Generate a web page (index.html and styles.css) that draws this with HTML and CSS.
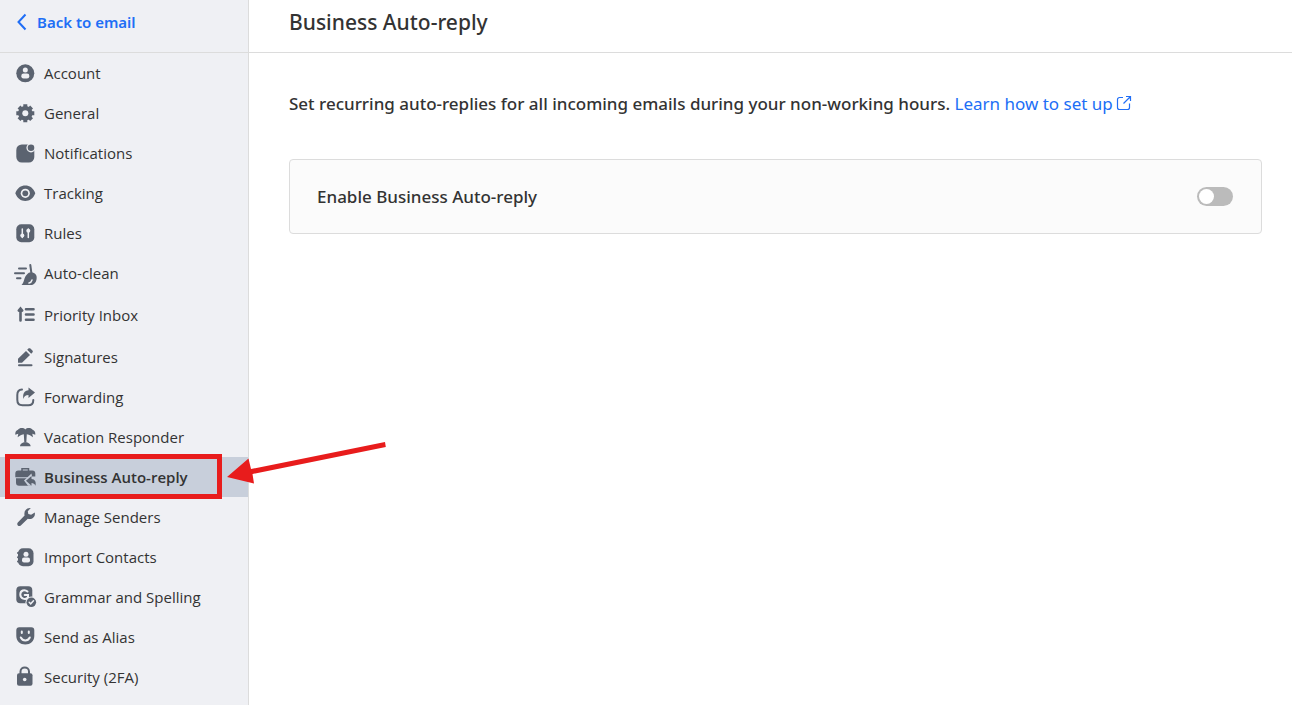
FILE: index.html
```
<!DOCTYPE html>
<html lang="en">
<head>
    <meta charset="UTF-8">
    <meta name="viewport" content="width=device-width, initial-scale=1.0">
    <title>Business Auto-reply</title>
    <link rel="stylesheet" href="styles.css">
</head>
<body>
    <div class="app">
        <aside class="sidebar">
            <a class="back" href="#">
                <svg class="back-icon" viewBox="0 0 12 18"><path d="M9.5 1.5 2.5 9l7 7.5"/></svg>
                Back to email
            </a>
            <nav class="menu">
                <a class="item" href="#">
                    <svg class="icon" viewBox="0 0 22 22"><circle cx="11.3" cy="11.3" r="9"/><circle class="cut" cx="11.3" cy="8" r="2.5"/><rect class="cut" x="7.3" y="11.5" width="8" height="5" rx="2.3"/></svg>
                    Account
                </a>
                <a class="item" href="#">
                    <svg class="icon" viewBox="0 0 22 22"><circle cx="11.3" cy="11.3" r="7.2"/><path class="line teeth" d="M11.3 2.3v18M2.3 11.3h18M5 5l12.6 12.6M17.6 5 5 17.6"/><circle class="cut" cx="11.3" cy="11.3" r="3"/></svg>
                    General
                </a>
                <a class="item" href="#">
                    <svg class="icon" viewBox="0 0 22 22"><rect x="2.3" y="2.5" width="18" height="18" rx="5.5"/><circle class="cut" cx="17" cy="5.8" r="4.6"/><circle cx="17" cy="5.8" r="3.3"/></svg>
                    Notifications
                </a>
                <a class="item" href="#">
                    <svg class="icon" viewBox="0 0 22 22"><path d="M1.3 11.3C3.3 6 7 3.6 11.3 3.6s8 2.400 10 7.700c-2 5.300-5.700 7.700-10 7.700s-8-2.400-10-7.700z"/><circle class="cut" cx="11.3" cy="11.3" r="4.600"/><circle cx="11.3" cy="11.3" r="2.900"/></svg>
                    Tracking
                </a>
                <a class="item" href="#">
                    <svg class="icon" viewBox="0 0 22 22"><rect x="2.3" y="2.3" width="18" height="18" rx="5"/><path class="cut-line thin" d="M8.3 7v8.500M14.300 7v8.500"/><circle class="cut" cx="8.3" cy="13.4" r="2"/><circle class="cut" cx="14.3" cy="8.8" r="2"/></svg>
                    Rules
                </a>
                <a class="item" href="#">
                    <svg class="icon" viewBox="0 0 22 22"><path class="line" d="M5 6.5h7M1 11.300h9M3 16.300h3.500M16.300 3l1.200 9"/><path d="M12.500 13c2-2.500 4-3 6-2.500s3.500 1.500 4 3.500c.8 4-1 8-4.500 9H7.500c2.800-2.500 2.500-7.500 5-10z"/><path class="cut-line thin" d="M15 21c1.500-.3 2.600-1.500 3-3"/></svg>
                    Auto-clean
                </a>
                <a class="item tall" href="#">
                    <svg class="icon" viewBox="0 0 22 22"><path class="line priority" d="M6.5 16.5V6M4.800 6.500l1.700-2 1.700 2M12 5.300h7.500M12 10.500h7.500M12 15.700h7.500"/></svg>
                    Priority Inbox
                </a>
                <a class="item" href="#">
                    <svg class="icon" viewBox="0 0 22 22"><path d="M4 16.800v-4L12 5l4 4-8 7.800zM13.200 3.800l1.200-1.200c.6-.6 1.400-.6 2 0l2 2c.6.6.6 1.400 0 2l-1.200 1.200z"/><path class="line" d="M5 19.300h12.500"/></svg>
                    Signatures
                </a>
                <a class="item" href="#">
                    <svg class="icon" viewBox="0 0 22 22"><path class="line" d="M8 3.500C4.800 3.700 3.300 5.500 3.300 9v4.800c0 3.500 2 5.500 5.200 5.500h5.800c3.200 0 5-2 5-5.300"/><path d="M14.500 1.500 21 6.500l-6.500 5.500V9c-3 0-4.500 1.200-5 4-1.200-5 1-8.500 5-8.700z"/></svg>
                    Forwarding
                </a>
                <a class="item" href="#">
                    <svg class="icon" viewBox="0 0 22 22"><path d="M11.300 3.500c-1.500-1.800-5.800-2-7.300.3C2 4.300 1 6.300 1.300 8.800L4.300 7.800 3.600 11.300C5 10.500 7 8.500 9.800 8.300L10.300 16.500h2L12.800 8.300c2.800.2 4.800 2.200 6.200 3l-.7-3.500 3 1c.3-2.500-.7-4.500-2.700-5-1.500-2.300-5.800-2.100-7.300-.3z"/><path d="M6 20.300c0-2.300 2.300-4 5.300-4s5.300 1.700 5.300 4z"/></svg>
                    Vacation Responder
                </a>
                <a class="item active" href="#">
                    <svg class="icon" viewBox="0 0 22 22"><path class="line thin" d="M8 5V2.800h6.500V5"/><path d="M4.300 4.500h14a3 3 0 0 1 3 3v3.700h-20V7.500a3 3 0 0 1 3-3z"/><path d="M2 12.300h18.500v7.400H5a3 3 0 0 1-3-3z"/><path class="cut" d="M10 14.500 17.500 7.500l.5 3h4.500V22H17v-2.300h-3z"/><path d="m12 14.700 5.500-4.700v3c3.500.3 4.800 2.700 4 6.800-.8-2-2-2.800-4-2.800v2.700z"/></svg>
                    Business Auto-reply
                </a>
                <a class="item" href="#">
                    <svg class="icon" viewBox="0 0 22 22"><path d="M20.800 6.500c.8 4.500-2.800 7.500-7 6.300L6.800 19.500c-2.200 1.700-4.700-.8-3-3l6.800-7C9.500 5.300 12.300 1.500 16.800 2l-3 3.300.5 2.700 2.800.8z"/></svg>
                    Manage Senders
                </a>
                <a class="item" href="#">
                    <svg class="icon" viewBox="0 0 22 22"><rect x="4" y="2.3" width="15.5" height="18" rx="5"/><path class="line" d="M4 7h2M4 11.300h2M4 15.600h2"/><circle class="cut" cx="12" cy="8.3" r="2.5"/><rect class="cut" x="8" y="11.4" width="8" height="5" rx="2"/></svg>
                    Import Contacts
                </a>
                <a class="item" href="#">
                    <svg class="icon" viewBox="0 0 22 22"><rect x="2.3" y="0.3" width="16" height="17" rx="4"/><path class="cut-line" d="M13.500 5.500C10.500 2.800 6.300 4.500 6.300 8.500s5 6 7.700 3V9h-3.300"/><circle class="cut" cx="17.3" cy="16.3" r="5.8"/><circle cx="17.3" cy="16.3" r="4.8"/><path class="cut-line thin" d="m15.200 16.300 1.500 1.500 2.800-3"/></svg>
                    Grammar and Spelling
                </a>
                <a class="item" href="#">
                    <svg class="icon" viewBox="0 0 22 22"><path d="M5.300 1.300h12a3 3 0 0 1 3 3V10c0 5-4 8.500-9 8.500s-9-3.500-9-8.500V4.300a3 3 0 0 1 3-3z"/><path class="cut-line" d="M7.800 5.500v1.500M14.800 5.500v1.500M6.800 11.500c2 4 7 4 9 0"/></svg>
                    Send as Alias
                </a>
                <a class="item" href="#">
                    <svg class="icon" viewBox="0 0 22 22"><rect x="3" y="7.3" width="15.5" height="12.5" rx="2"/><path class="line" d="M6.500 8V5.500c0-5.500 8.500-5.500 8.500 0V8"/><circle class="cut" cx="10.7" cy="13.5" r="1.8"/></svg>
                    Security (2FA)
                </a>
            </nav>
        </aside>

        <main class="content">
            <header class="header">
                <h1>Business Auto-reply</h1>
            </header>
            <section class="settings">
                <p class="intro">
                    Set recurring auto-replies for all incoming emails during your non-working hours.
                    <a class="learn" href="#">Learn how to set up
                        <svg class="external" viewBox="0 0 14 14"><path d="M6 1.500H2.500a2 2 0 0 0-2 2v8a2 2 0 0 0 2 2h8a2 2 0 0 0 2-2V7.500M9 .5h4.500V5M13.500.5 6.500 7.500"/></svg></a>
                </p>
                <div class="card">
                    <label for="enable">Enable Business Auto-reply</label>
                    <input class="toggle" type="checkbox" role="switch" id="enable">
                </div>
            </section>
        </main>
    </div>

    <!-- Callout -->
    <div class="highlight"></div>
    <svg class="arrow" viewBox="0 0 160 44"><path d="M158 0l.8 5L25.500 32l1.500 9.500L0 35l21.500-18.500 2.500 10.500z"/></svg>
</body>
</html>
```
FILE: styles.css
```
/* General Styles */
* {
    box-sizing: border-box;
}

body {
    margin: 0;
    font-family: 'Segoe UI', 'Noto Sans', sans-serif;
    font-size: 15px;
    color: #333333;
    background: #ffffff;
}

a {
    text-decoration: none;
}

.app {
    display: flex;
    min-height: 100vh;
}

/* Sidebar */
.sidebar {
    flex: none;
    width: 249px;
    background: #eff0f4;
    border-right: 1px solid #dcdcdc;
}

.back {
    display: flex;
    align-items: center;
    gap: 9px;
    height: 53px;
    padding: 0 16px 8px;
    border-bottom: 1px solid #dcdcdc;
    color: #206ef6;
    font-weight: 600;
}

.back-icon {
    width: 12px;
    height: 18px;
    fill: none;
    stroke: #206ef6;
    stroke-width: 2;
}

.menu {
    font-family: 'Segoe UI', 'Open Sans', sans-serif;
}

.item {
    display: flex;
    align-items: center;
    gap: 8px;
    height: 40px;
    padding-left: 14px;
    color: #333333;
}

.item.tall {
    height: 44px;
}

.item.active {
    background: #c8cfdb;
    font-weight: 600;
}

/* Icons */
.icon {
    flex: none;
    width: 22px;
    height: 22px;
    overflow: visible;
    fill: #5b6370;
}

.cut {
    fill: #eff0f4;
}

.active .cut {
    fill: #c8cfdb;
}

.line,
.cut-line {
    fill: none;
    stroke: #5b6370;
    stroke-width: 2;
    stroke-linecap: round;
}

.cut-line {
    stroke: #eff0f4;
}

.thin {
    stroke-width: 1.5;
}

.priority {
    stroke-width: 2.6;
}

.teeth {
    stroke-width: 4;
    stroke-linecap: butt;
}

/* Content */
.content {
    flex: 1;
    min-width: 0;
}

.header {
    display: flex;
    align-items: center;
    height: 53px;
    padding: 0 40px 8px;
    border-bottom: 1px solid #dcdcdc;
}

h1 {
    margin: 0;
    font-size: 21px;
    font-weight: 500;
}

.settings {
    padding: 38px 30px 40px 40px;
}

.intro {
    margin: 0 0 43px;
    font-size: 17px;
    line-height: 25px;
    font-weight: 500;
}

.learn {
    color: #206ef6;
    font-weight: 400;
}

.external {
    width: 14px;
    height: 14px;
    overflow: visible;
    fill: none;
    stroke: #206ef6;
    stroke-width: 1.2;
}

.card {
    display: flex;
    align-items: center;
    justify-content: space-between;
    padding: 24px 28px 24px 27px;
    border: 1px solid #dcdcdc;
    border-radius: 4px;
    background: #fbfbfb;
    font-size: 17px;
    line-height: 25px;
    font-weight: 500;
}

/* Toggle */
.toggle {
    appearance: none;
    width: 36px;
    height: 19px;
    margin: 0;
    padding: 2px;
    border-radius: 10px;
    background: #bbbbbb;
    cursor: pointer;
}

.toggle::before {
    content: "";
    display: block;
    width: 15px;
    height: 15px;
    border-radius: 50%;
    background: #ffffff;
}

.toggle:checked {
    background: #206ef6;
}

.toggle:checked::before {
    margin-left: auto;
}

/* Callout */
.highlight {
    position: absolute;
    left: 5px;
    top: 454px;
    width: 217px;
    height: 45px;
    border: 5px solid #e81c1c;
    pointer-events: none;
}

.arrow {
    position: absolute;
    left: 227px;
    top: 442px;
    width: 160px;
    height: 44px;
    fill: #e81c1c;
    pointer-events: none;
}
```
